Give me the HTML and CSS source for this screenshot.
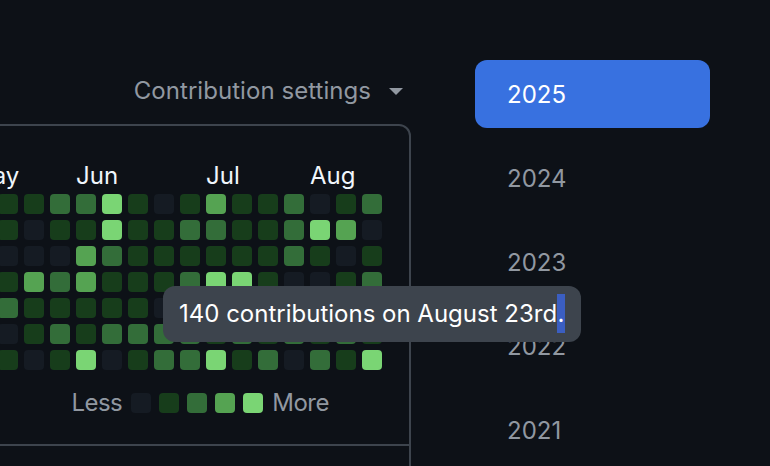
FILE: index.html
```html
<!DOCTYPE html>
<html lang="en">
<head>
<meta charset="utf-8">
<title>Contributions</title>
<link rel="stylesheet" href="styles.css">
</head>
<body>
<div class="page">
  <section class="calendar-col">
    <div class="settings">
      <span class="settings-label">Contribution settings</span>
      <span class="caret"></span>
    </div>
    <div class="box">
      <div class="calendar">
        <div class="months">
          <span class="month m-may">May</span>
          <span class="month m-jun">Jun</span>
          <span class="month m-jul">Jul</span>
          <span class="month m-aug">Aug</span>
        </div>
        <div class="cells">
          <!-- row 0 -->
          <i class="c l1"></i><i class="c l1"></i><i class="c l1"></i><i class="c l2"></i><i class="c l2"></i><i class="c l4"></i><i class="c l1"></i><i class="c l0"></i><i class="c l1"></i><i class="c l3"></i><i class="c l1"></i><i class="c l1"></i><i class="c l2"></i><i class="c l0"></i><i class="c l1"></i><i class="c l2"></i>
          <!-- row 1 -->
          <i class="c l2"></i><i class="c l1"></i><i class="c l0"></i><i class="c l1"></i><i class="c l1"></i><i class="c l4"></i><i class="c l1"></i><i class="c l1"></i><i class="c l2"></i><i class="c l2"></i><i class="c l1"></i><i class="c l1"></i><i class="c l2"></i><i class="c l4"></i><i class="c l3"></i><i class="c l0"></i>
          <!-- row 2 -->
          <i class="c l1"></i><i class="c l0"></i><i class="c l0"></i><i class="c l0"></i><i class="c l3"></i><i class="c l2"></i><i class="c l1"></i><i class="c l1"></i><i class="c l1"></i><i class="c l1"></i><i class="c l1"></i><i class="c l1"></i><i class="c l2"></i><i class="c l1"></i><i class="c l0"></i><i class="c l1"></i>
          <!-- row 3 -->
          <i class="c l0"></i><i class="c l1"></i><i class="c l3"></i><i class="c l2"></i><i class="c l3"></i><i class="c l1"></i><i class="c l1"></i><i class="c l1"></i><i class="c l2"></i><i class="c l4"></i><i class="c l4"></i><i class="c l1"></i><i class="c l0"></i><i class="c l0"></i><i class="c l1"></i><i class="c l2"></i>
          <!-- row 4 -->
          <i class="c l1"></i><i class="c l2"></i><i class="c l1"></i><i class="c l1"></i><i class="c l1"></i><i class="c l1"></i><i class="c l1"></i><i class="c l0"></i><i class="c l1"></i><i class="c l2"></i><i class="c l1"></i><i class="c l1"></i><i class="c l2"></i><i class="c l1"></i><i class="c l3"></i><i class="c l1"></i>
          <!-- row 5 -->
          <i class="c l2"></i><i class="c l0"></i><i class="c l1"></i><i class="c l2"></i><i class="c l1"></i><i class="c l2"></i><i class="c l2"></i><i class="c l2"></i><i class="c l2"></i><i class="c l1"></i><i class="c l2"></i><i class="c l1"></i><i class="c l2"></i><i class="c l1"></i><i class="c l2"></i><i class="c l1"></i>
          <!-- row 6 -->
          <i class="c l1"></i><i class="c l1"></i><i class="c l0"></i><i class="c l1"></i><i class="c l4"></i><i class="c l0"></i><i class="c l1"></i><i class="c l2"></i><i class="c l2"></i><i class="c l4"></i><i class="c l1"></i><i class="c l2"></i><i class="c l0"></i><i class="c l2"></i><i class="c l1"></i><i class="c l4"></i>
        </div>
        <div class="legend">
          <span class="legend-text">Less</span>
          <span class="swatches">
            <i class="c l0"></i><i class="c l1"></i><i class="c l2"></i><i class="c l3"></i><i class="c l4"></i>
          </span>
          <span class="legend-text">More</span>
        </div>
      </div>
      <div class="box-footer"></div>
    </div>
  </section>

  <nav class="years">
    <a class="year selected">2025</a>
    <a class="year">2024</a>
    <a class="year">2023</a>
    <a class="year">2022</a>
    <a class="year">2021</a>
  </nav>

  <div class="tooltip">140 contributions on August 23rd<span class="sel">.</span></div>
</div>
</body>
</html>
```

FILE: styles.css
```css
html, body {
  margin: 0;
  padding: 0;
  background: #0d1117;
  overflow: hidden;
}

body {
  width: 770px;
  height: 466px;
  font-family: Inter, "Liberation Sans", Arial, sans-serif;
  font-size: 24px;
  line-height: 36px;
  color: #f0f6fc;
}

.page {
  position: relative;
  display: flex;
  align-items: flex-start;
  gap: 64px;
  padding-top: 60px;
  height: 406px;
}

/* left column */
.calendar-col {
  margin-left: -60px;
  width: 471px;
  flex: none;
  display: flex;
  flex-direction: column;
}

.settings {
  margin-top: 13px;
  display: flex;
  align-items: center;
  justify-content: flex-end;
  gap: 18px;
  padding-right: 8px;
  color: #9198a1;
}

.settings-label {
  letter-spacing: 0.05px;
}

.caret {
  width: 0;
  height: 0;
  border-top: 7px solid #9198a1;
  border-left: 7px solid transparent;
  border-right: 7px solid transparent;
  margin-top: 1px;
}

.box {
  margin-top: 15px;
  border: 2px solid #3d444d;
  border-radius: 12px;
  height: 400px;
  box-sizing: border-box;
}

.calendar {
  padding: 32px 27px 23px 30px;
  border-bottom: 2px solid #3d444d;
}

.months {
  display: grid;
  grid-template-columns: repeat(16, 20px);
  column-gap: 6px;
  height: 36px;
  color: #f0f6fc;
}

.month {
  grid-row: 1;
  white-space: nowrap;
}

.m-may { grid-column: 1 / span 3; margin-left: -1px; }
.m-jun { grid-column: 5 / span 3; }
.m-jul { grid-column: 10 / span 3; }
.m-aug { grid-column: 14 / span 3; }

.cells {
  display: grid;
  grid-template-columns: repeat(16, 20px);
  grid-auto-rows: 20px;
  gap: 6px;
}

.c {
  display: block;
  width: 20px;
  height: 20px;
  border-radius: 4px;
}

.l0 { background: #151b23; }
.l1 { background: #173d1b; }
.l2 { background: #336d39; }
.l3 { background: #55a352; }
.l4 { background: #7ad574; }

.legend {
  margin-top: 15px;
  display: flex;
  align-items: center;
  justify-content: flex-end;
  padding-right: 53px;
  gap: 9px;
  color: #9198a1;
}

.legend-text {
  letter-spacing: -0.5px;
}

.swatches {
  display: flex;
  gap: 8px;
}

/* right column */
.years {
  width: 235px;
  flex: none;
  display: flex;
  flex-direction: column;
  gap: 16px;
}

.year {
  display: block;
  padding: 17px 32px 15px;
  border-radius: 12px;
  color: #9198a1;
}

.year.selected {
  background: #3871e0;
  color: #ffffff;
}

/* tooltip over the grid */
.tooltip {
  position: absolute;
  left: 163px;
  top: 286px;
  padding: 10px 16px;
  background: #3d444d;
  border-radius: 12px;
  color: #ffffff;
  white-space: nowrap;
}

.sel {
  background: #3b5ec1;
  padding: 5px 0.5px;
}
```
